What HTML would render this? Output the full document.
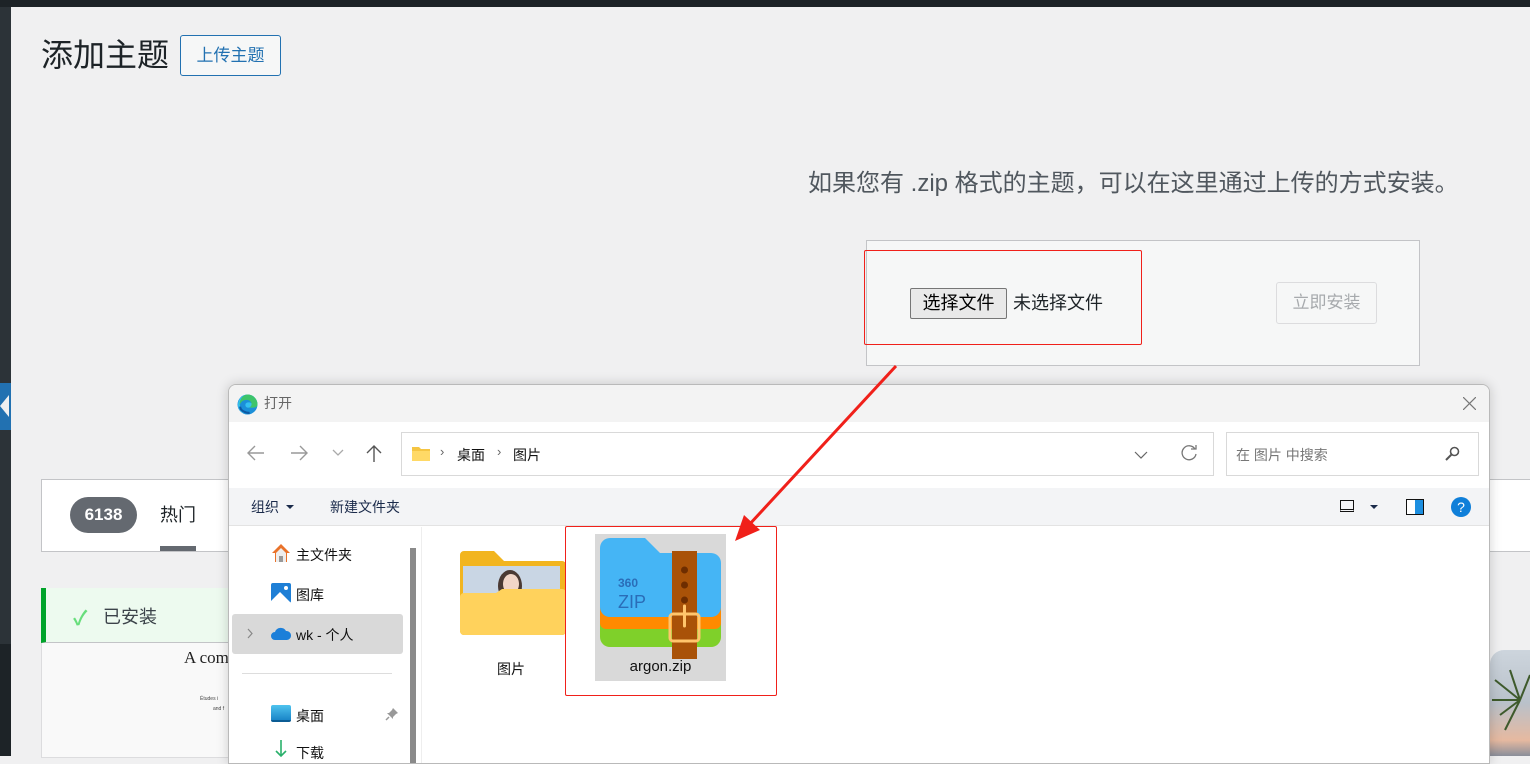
<!DOCTYPE html>
<html><head><meta charset="utf-8">
<style>
*{margin:0;padding:0;box-sizing:border-box}
body{width:1530px;height:756px;overflow:hidden;background:#f0f0f1;font-family:"Liberation Sans","Noto Sans CJK SC",sans-serif;position:relative;color:#1d2327}
.a{position:absolute}
</style></head><body>
<div class="a" style="left:0;top:0;width:1530px;height:7px;background:#1d2327"></div>
<div class="a" style="left:0;top:7px;width:11px;height:637px;background:#2c3338"></div>
<div class="a" style="left:0;top:644px;width:11px;height:112px;background:#1d2327"></div>
<div class="a" style="left:0;top:383px;width:11px;height:47px;background:#2271b1"></div>
<div class="a" style="left:0;top:395px;width:0;height:0;border-top:11px solid transparent;border-bottom:11px solid transparent;border-right:9px solid #f0f0f1"></div>

<div class="a" style="left:41px;top:35px;font-size:32px;color:#1d2327;line-height:40px">添加主题</div>
<div class="a" style="left:180px;top:35px;width:101px;height:41px;border:1px solid #2271b1;border-radius:3px;background:#f6f7f7;color:#2271b1;font-size:17px;line-height:39px;text-align:center">上传主题</div>

<div class="a" style="left:808px;top:168px;font-size:24px;color:#50575e;line-height:32px;white-space:nowrap">如果您有 .zip 格式的主题，可以在这里通过上传的方式安装。</div>

<div class="a" style="left:866px;top:240px;width:554px;height:126px;border:1px solid #c3c4c7;background:#f6f7f7"></div>
<div class="a" style="left:864px;top:250px;width:278px;height:95px;border:1px solid #f0201a;border-radius:2px"></div>
<div class="a" style="left:910px;top:288px;width:97px;height:31px;border:1px solid #767676;border-radius:2px;background:#e9e9e9;font-size:18px;line-height:29px;text-align:center;color:#000">选择文件</div>
<div class="a" style="left:1013px;top:289px;font-size:18px;line-height:29px;color:#1d2327">未选择文件</div>
<div class="a" style="left:1276px;top:282px;width:101px;height:42px;border:1px solid #dcdcde;border-radius:3px;color:#a7aaad;font-size:17px;line-height:40px;text-align:center">立即安装</div>

<div class="a" style="left:41px;top:479px;width:1500px;height:73px;background:#fff;border:1px solid #c3c4c7"></div>
<div class="a" style="left:70px;top:497px;width:67px;height:36px;border-radius:18px;background:#646970;color:#fff;font-weight:bold;font-size:17px;line-height:36px;text-align:center">6138</div>
<div class="a" style="left:160px;top:503px;font-size:18px;line-height:24px">热门</div>
<div class="a" style="left:160px;top:546px;width:36px;height:5px;background:#646970"></div>

<div class="a" style="left:41px;top:588px;width:200px;height:170px;background:#f9f9f9;border:1px solid #dcdcde"></div>
<div class="a" style="left:41px;top:588px;width:200px;height:55px;background:#edfaef;border-left:5px solid #00a32a;border-bottom:1px solid #c3c4c7"></div>
<div class="a" style="left:73px;top:602px;color:#68de7c;font-size:20px;font-weight:bold">✓</div>
<div class="a" style="left:103px;top:603px;font-size:18px;color:#3c434a">已安装</div>
<div class="a" style="left:184px;top:648px;font-family:'Liberation Serif',serif;font-size:17px;color:#222">A com</div>
<div class="a" style="left:200px;top:696px;font-size:5px;color:#444">Études i</div>
<div class="a" style="left:213px;top:706px;font-size:5px;color:#444">and f</div>

<div class="a" style="left:1490px;top:650px;width:40px;height:106px;background:linear-gradient(#cdd5dd,#b9c1ca 50%,#e6b9a0 85%,#8a8e9a);border-top-left-radius:14px"></div>
<svg class="a" style="left:1490px;top:660px" width="40" height="96"><g stroke="#3e5a2c" stroke-width="2"><line x1="30" y1="40" x2="5" y2="20"/><line x1="30" y1="40" x2="10" y2="55"/><line x1="30" y1="40" x2="2" y2="40"/><line x1="30" y1="40" x2="20" y2="10"/><line x1="30" y1="40" x2="40" y2="15"/><line x1="30" y1="40" x2="15" y2="70"/></g></svg>

<div class="a" style="left:228px;top:384px;width:1262px;height:380px;background:#fff;border:1px solid #b9b9b9;border-radius:8px 8px 0 0;overflow:hidden;box-shadow:0 0 12px rgba(0,0,0,.18)">
 <div class="a" style="left:0;top:0;width:1262px;height:37px;background:#f3f3f3"></div>
 <svg class="a" style="left:8px;top:9px" width="21" height="21" viewBox="0 0 20 20"><circle cx="10" cy="10" r="9.5" fill="#1b8fd8"/><path d="M10 .5a9.5 9.5 0 0 1 9.5 9.5c0 2-2 3-4 3h-5c-1.5 0-2.5-1-2.5-2.5S9 8 11 8s3 1 3 1-1-4-5-4S2 8 3 12 8 18 12 18c-5 2-11-1-11-8A9.5 9.5 0 0 1 10 .5z" fill="#35c1f1"/><path d="M10 .5c5 0 9.5 4 9.5 9.5 0 2-2 3-4 3h-4c2-1 3-3 2-5-2-4-10-3-11 3C2 5 6 .5 10 .5z" fill="#3dc46a"/><path d="M12 18c-4 0-9-2-9-6" stroke="#0c59a4" stroke-width="2" fill="none"/></svg>
 <div class="a" style="left:35px;top:8px;font-size:14px;color:#666">打开</div>
 <svg class="a" style="left:1234px;top:12px" width="13" height="13"><path d="M0 0L13 13M13 0L0 13" stroke="#777" stroke-width="1.2"/></svg>

 <svg class="a" style="left:18px;top:60px" width="18" height="16"><path d="M17 8H2M8 1L1 8l7 7" stroke="#999" stroke-width="1.4" fill="none"/></svg>
 <svg class="a" style="left:61px;top:60px" width="18" height="16"><path d="M1 8h15M10 1l7 7-7 7" stroke="#999" stroke-width="1.4" fill="none"/></svg>
 <svg class="a" style="left:103px;top:64px" width="12" height="8"><path d="M1 1l5 5 5-5" stroke="#aaa" stroke-width="1.3" fill="none"/></svg>
 <svg class="a" style="left:136px;top:59px" width="18" height="19"><path d="M9 18V2M2 9l7-7 7 7" stroke="#555" stroke-width="1.4" fill="none"/></svg>
 <div class="a" style="left:172px;top:47px;width:813px;height:44px;border:1px solid #d9d9d9;background:#fff"></div>
 <svg class="a" style="left:183px;top:61px" width="18" height="15"><path d="M0 1h7l2 2h9v12H0z" fill="#f5c542"/><path d="M0 5h18v10H0z" fill="#ffd966"/></svg>
 <div class="a" style="left:211px;top:59px;font-size:13px;color:#666">›</div>
 <div class="a" style="left:228px;top:60px;font-size:14px;color:#111">桌面</div>
 <div class="a" style="left:268px;top:59px;font-size:13px;color:#666">›</div>
 <div class="a" style="left:284px;top:60px;font-size:14px;color:#111">图片</div>
 <svg class="a" style="left:905px;top:66px" width="14" height="9"><path d="M1 1l6 6 6-6" stroke="#666" stroke-width="1.2" fill="none"/></svg>
 <svg class="a" style="left:951px;top:60px" width="18" height="18"><path d="M15 4A7 7 0 1 0 16 9" stroke="#777" stroke-width="1.3" fill="none"/><path d="M11 4h5V0" stroke="#777" stroke-width="1.3" fill="none"/></svg>
 <div class="a" style="left:997px;top:47px;width:253px;height:44px;border:1px solid #d9d9d9;background:#fff"></div>
 <div class="a" style="left:1007px;top:60px;font-size:14px;color:#777">在 图片 中搜索</div>
 <svg class="a" style="left:1216px;top:61px" width="15" height="15"><circle cx="9.5" cy="5.5" r="4" stroke="#555" stroke-width="1.6" fill="none"/><path d="M6.5 8.5L1 14" stroke="#555" stroke-width="2"/></svg>

 <div class="a" style="left:0;top:103px;width:1262px;height:38px;background:#f3f4f6;border-bottom:1px solid #e3e3e3"></div>
 <div class="a" style="left:22px;top:112px;font-size:14px;color:#1a2a4a">组织</div>
 <div class="a" style="left:57px;top:120px;border-left:4px solid transparent;border-right:4px solid transparent;border-top:4px solid #1a2a4a"></div>
 <div class="a" style="left:101px;top:112px;font-size:14px;color:#1a2a4a">新建文件夹</div>
 <div class="a" style="left:1111px;top:115px;width:14px;height:12px;border:1.5px solid #111;border-bottom-width:3px;border-bottom-style:double"></div>
 <div class="a" style="left:1141px;top:120px;border-left:4px solid transparent;border-right:4px solid transparent;border-top:4px solid #1a2a4a"></div>
 <div class="a" style="left:1177px;top:114px;width:18px;height:16px;border:1.5px solid #111;background:linear-gradient(90deg,#fff 50%,#1d8fe0 50%)"></div>
 <div class="a" style="left:1222px;top:112px;width:20px;height:20px;border-radius:50%;background:#0f7fd9;color:#fff;font-size:14px;line-height:20px;text-align:center">?</div>

 <div class="a" style="left:181px;top:163px;width:6px;height:220px;background:#8a8a8a"></div>
 <div class="a" style="left:192px;top:142px;width:1px;height:240px;background:#eee"></div>
 <svg class="a" style="left:42px;top:158px" width="20" height="20"><path d="M10 1L1 10h3v9h12v-9h3z" fill="#e9722a"/><path d="M5 10l5-5 5 5v9H5z" fill="#eee"/><rect x="8" y="13" width="4" height="6" fill="#999"/></svg>
 <div class="a" style="left:67px;top:160px;font-size:14px;color:#111">主文件夹</div>
 <svg class="a" style="left:42px;top:198px" width="20" height="20"><rect x="0" y="0" width="20" height="20" rx="2" fill="#1e7fd6"/><path d="M0 18L9 9l11 11H0z" fill="#fff"/><circle cx="15" cy="5" r="2" fill="#fff"/></svg>
 <div class="a" style="left:67px;top:200px;font-size:14px;color:#111">图库</div>
 <div class="a" style="left:3px;top:229px;width:171px;height:40px;background:#d9d9d9;border-radius:3px"></div>
 <svg class="a" style="left:18px;top:243px" width="7" height="11"><path d="M1 1l4 4.5L1 10" stroke="#888" stroke-width="1.2" fill="none"/></svg>
 <svg class="a" style="left:42px;top:241px" width="20" height="14"><path d="M4 14a4 4 0 0 1 0-8 6 6 0 0 1 11-1 4.5 4.5 0 0 1 1 9z" fill="#1c7fd9"/></svg>
 <div class="a" style="left:67px;top:240px;font-size:14px;color:#111">wk - 个人</div>
 <div class="a" style="left:13px;top:288px;width:150px;height:1px;background:#ddd"></div>
 <div class="a" style="left:42px;top:320px;width:20px;height:17px;background:linear-gradient(#4ec3ee,#1a86c8);border-radius:2px;border-bottom:2px solid #0b5c94"></div>
 <div class="a" style="left:67px;top:321px;font-size:14px;color:#111">桌面</div>
 <svg class="a" style="left:156px;top:322px" width="14" height="14"><path d="M8 1l5 5-2 1-3 3 0 2-6-6 2 0 3-3z" fill="#999"/><path d="M4 10L1 13" stroke="#999" stroke-width="1.5"/></svg>
 <svg class="a" style="left:45px;top:355px" width="14" height="20"><path d="M7 0v16M2 11l5 5 5-5" stroke="#2ab06b" stroke-width="1.6" fill="none"/></svg>
 <div class="a" style="left:67px;top:358px;font-size:14px;color:#111">下载</div>

 <svg class="a" style="left:231px;top:166px" width="106" height="84"><path d="M0 4a4 4 0 0 1 4-4h30l10 10h58a4 4 0 0 1 4 4v66a4 4 0 0 1-4 4H4a4 4 0 0 1-4-4z" fill="#f2b51f"/><rect x="3" y="15" width="97" height="35" fill="#c9d6e4"/><ellipse cx="50" cy="35" rx="12" ry="16" fill="#4a3a34"/><ellipse cx="51" cy="33" rx="8" ry="10" fill="#f1d6c8"/><path d="M0 46a4 4 0 0 1 4-4h32l6-4h60a4 4 0 0 1 4 4v38a4 4 0 0 1-4 4H4a4 4 0 0 1-4-4z" fill="#ffd25c"/></svg>
 <div class="a" style="left:268px;top:274px;font-size:14px;color:#111">图片</div>
 <div class="a" style="left:366px;top:149px;width:131px;height:147px;background:#d9d9d9"></div>
 <svg class="a" style="left:371px;top:153px" width="121" height="121"><path d="M0 44h121v55a10 10 0 0 1-10 10H10A10 10 0 0 1 0 99z" fill="#7fd02a"/><path d="M0 30h121v55a6 6 0 0 1-6 6H6a6 6 0 0 1-6-6z" fill="#ff8a00"/><path d="M0 10a10 10 0 0 1 10-10h35l15 15h51a10 10 0 0 1 10 10v44a10 10 0 0 1-10 10H10A10 10 0 0 1 0 69z" fill="#45b5f5"/><rect x="72" y="13" width="25" height="108" fill="#a95208"/><circle cx="84.5" cy="32" r="3.5" fill="#6e2d00"/><circle cx="84.5" cy="47" r="3.5" fill="#6e2d00"/><circle cx="84.5" cy="62" r="3.5" fill="#6e2d00"/><rect x="70" y="76" width="29" height="27" rx="3" fill="none" stroke="#ffc56c" stroke-width="3"/><line x1="84.5" y1="68" x2="84.5" y2="88" stroke="#ffc56c" stroke-width="3" stroke-linecap="round"/><text x="18" y="49" font-family="Liberation Sans" font-size="12" fill="#2a6db8" font-weight="bold">360</text><text x="18" y="70" font-family="Liberation Sans" font-size="18" fill="#2a6db8">ZIP</text></svg>
 <div class="a" style="left:366px;top:273px;width:131px;text-align:center;font-size:15px;color:#111">argon.zip</div>
 <div class="a" style="left:336px;top:141px;width:212px;height:170px;border:1px solid #f0201a;border-radius:2px"></div>
</div>

<svg class="a" style="left:0;top:0" width="1530" height="756"><line x1="896" y1="366" x2="748" y2="526" stroke="#f0201a" stroke-width="3"/><path d="M735 541L744 515L760 530z" fill="#f0201a"/></svg>
</body></html>
